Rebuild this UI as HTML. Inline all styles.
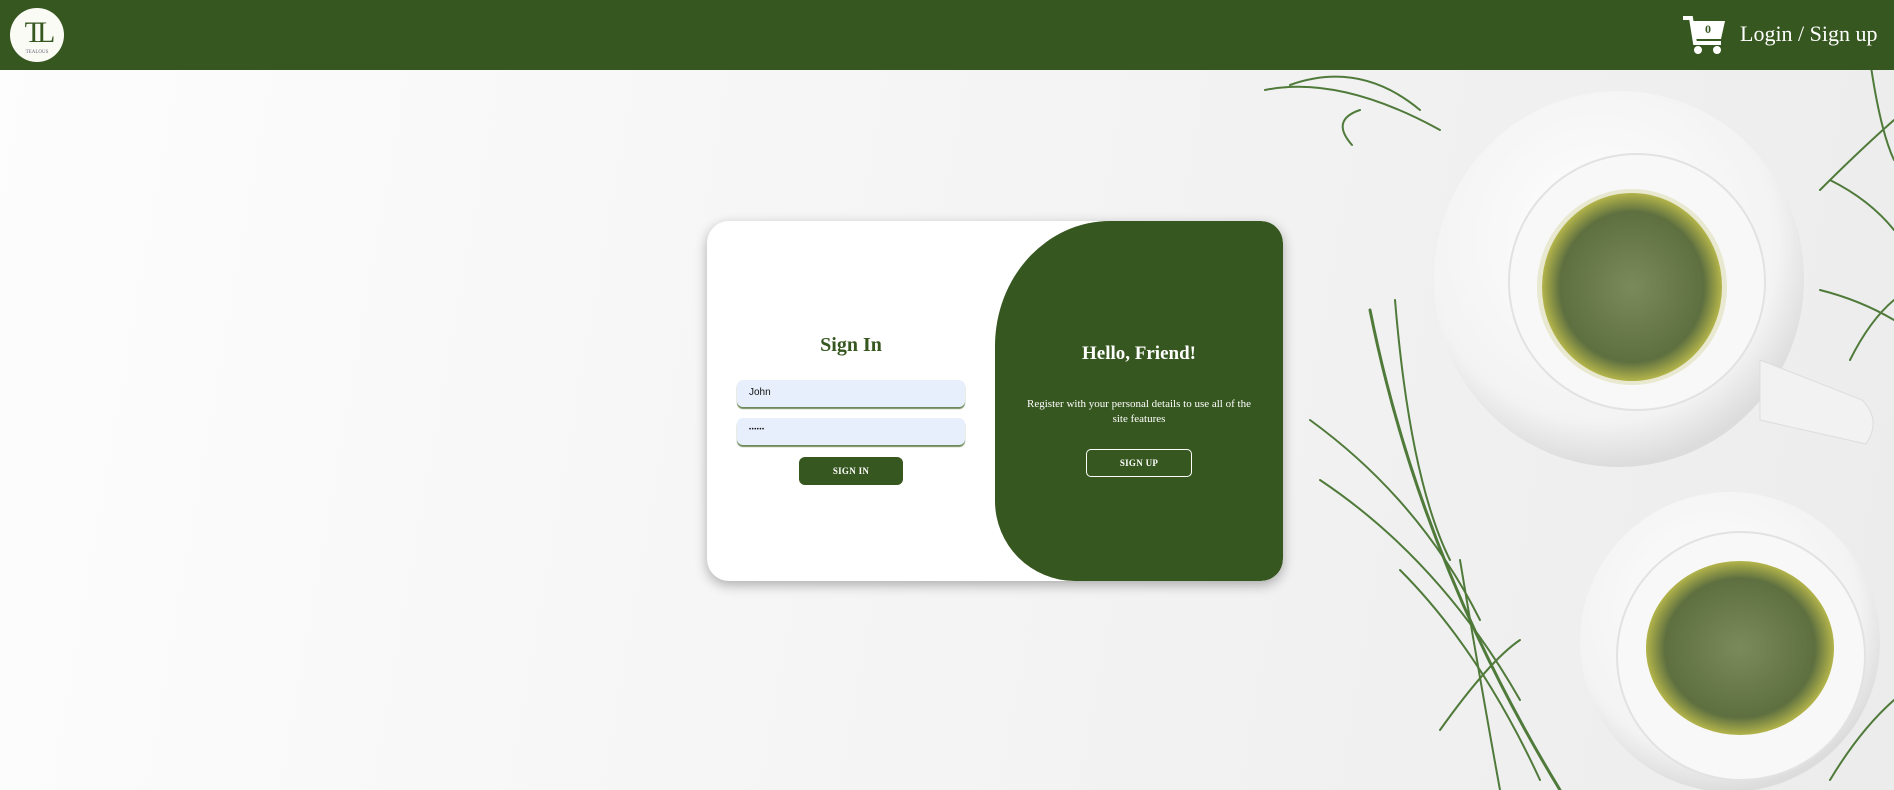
<!DOCTYPE html>
<html><head><meta charset="utf-8"><style>
*{margin:0;padding:0;box-sizing:border-box}
body{width:1894px;height:790px;overflow:hidden;position:relative;font-family:"Liberation Serif",serif;background:linear-gradient(100deg,#fdfdfd 0%,#f6f6f6 40%,#f1f1f1 70%,#ececec 100%)}
header{position:absolute;left:0;top:0;width:1894px;height:70px;background:#375720;z-index:5}
.logo{position:absolute;left:10px;top:8px;width:54px;height:54px;border-radius:50%;background:#fbfbf6;text-align:center;color:#375720;font-size:30px;line-height:50px;letter-spacing:-6px}
.logo small{position:absolute;left:0;right:0;bottom:7px;font-size:5px;letter-spacing:0;line-height:5px;color:#667}
.nav{position:absolute;left:1740px;top:21px;color:#fff;font-size:22px}
#bg{position:absolute;left:0;top:70px}
.card{position:absolute;left:707px;top:221px;width:576px;height:360px;background:#fff;border-radius:22px;box-shadow:0 4px 12px rgba(0,0,0,.3);overflow:hidden;z-index:2}
.green{position:absolute;left:288px;top:0;width:288px;height:360px;background:#375720;border-radius:115px 22px 22px 80px/125px 22px 22px 80px}
h2{position:absolute;font-weight:bold;text-align:center}
.in{position:absolute;left:30px;width:228px;height:27px;background:#e8effc;border-radius:6px;box-shadow:0 2px 1px #6f8a5a;font-family:"Liberation Sans",sans-serif;font-size:10px;padding:7px 12px;color:#111}
.btn{position:absolute;font-size:9px;font-weight:bold;text-align:center;color:#fff;letter-spacing:.3px}
</style></head><body>
<svg id="bg" width="1894" height="720" viewBox="0 70 1894 720">
<defs><radialGradient id="tea" cx="50%" cy="50%" r="50%"><stop offset="0" stop-color="#7b8a5a"/><stop offset=".8" stop-color="#5e7040"/><stop offset="1" stop-color="#b3b44a"/></radialGradient>
<radialGradient id="sau" cx="45%" cy="40%" r="60%"><stop offset="0" stop-color="#ffffff"/><stop offset=".8" stop-color="#f3f3f3"/><stop offset="1" stop-color="#dcdcdc"/></radialGradient></defs>
<g stroke="#4f7a3a" stroke-width="2" fill="none" stroke-linecap="round">
<path d="M1265 90 Q1340 75 1440 130" /><path d="M1360 110 Q1330 120 1352 145"/><path d="M1290 85 Q1360 60 1420 110"/>
<path d="M1370 310 Q1420 560 1560 790" stroke-width="3"/><path d="M1395 300 Q1410 480 1450 560"/><path d="M1310 420 Q1420 500 1480 620"/>
<path d="M1320 480 Q1440 560 1520 700"/><path d="M1400 570 Q1480 650 1540 780"/><path d="M1460 560 Q1480 680 1500 790"/><path d="M1440 730 Q1490 660 1520 640"/>
<path d="M1820 190 Q1860 150 1894 120"/><path d="M1830 180 Q1870 200 1894 230"/><path d="M1870 60 Q1880 130 1894 160"/>
<path d="M1820 290 Q1860 300 1894 320"/><path d="M1850 360 Q1870 320 1894 300"/><path d="M1830 780 Q1860 730 1894 700"/>
</g>
<ellipse cx="1619" cy="279" rx="185" ry="188" fill="url(#sau)"/>
<path d="M1760 360 L1862 400 Q1882 420 1866 444 L1760 420 Z" fill="#f2f2f2" stroke="#ddd"/>
<circle cx="1637" cy="282" r="128" fill="#f8f8f8" stroke="#e2e2e2" stroke-width="2"/>
<ellipse cx="1632" cy="287" rx="95" ry="98" fill="#e9e8d0"/>
<ellipse cx="1632" cy="287" rx="90" ry="94" fill="url(#tea)"/>
<ellipse cx="1730" cy="642" rx="150" ry="150" fill="url(#sau)"/>
<circle cx="1741" cy="656" r="124" fill="#f8f8f8" stroke="#e2e2e2" stroke-width="2"/>
<ellipse cx="1740" cy="648" rx="94" ry="87" fill="url(#tea)"/>
</svg>
<header>
<div class="logo">TL<small>TEALOUS</small></div>
<svg style="position:absolute;left:1683px;top:15px" width="44" height="40" viewBox="0 0 44 40"><path d="M0 3 H8 L12 28 H38" stroke="#fff" stroke-width="4" fill="none"/><path d="M9 6 H42 L38 24 H12 Z" fill="#fff"/><circle cx="15" cy="35" r="4" fill="#fff"/><circle cx="34" cy="35" r="4" fill="#fff"/><text x="25" y="18" font-size="12" font-weight="bold" fill="#375720" font-family="Liberation Serif" text-anchor="middle">0</text></svg>
<div class="nav">Login / Sign up</div>
</header>
<div class="card">
<h2 style="left:0;width:288px;top:113px;font-size:20px;color:#375720">Sign In</h2>
<div class="in" style="top:159px">John</div>
<div class="in" style="top:197px;font-size:6px;letter-spacing:.5px;padding-top:9px">••••••</div>
<div class="btn" style="left:92px;top:236px;width:104px;height:28px;background:#375720;border-radius:6px;line-height:28px">SIGN IN</div>
<div class="green">
<h2 style="left:0;width:288px;top:122px;font-size:19px;color:#fff">Hello, Friend!</h2>
<p style="position:absolute;left:24px;width:240px;top:176px;font-size:11px;line-height:15px;color:#fff;text-align:center">Register with your personal details to use all of the site features</p>
<div class="btn" style="left:91px;top:228px;width:106px;height:28px;border:1px solid #fff;border-radius:5px;line-height:26px">SIGN UP</div>
</div>
</div>
</body></html>
